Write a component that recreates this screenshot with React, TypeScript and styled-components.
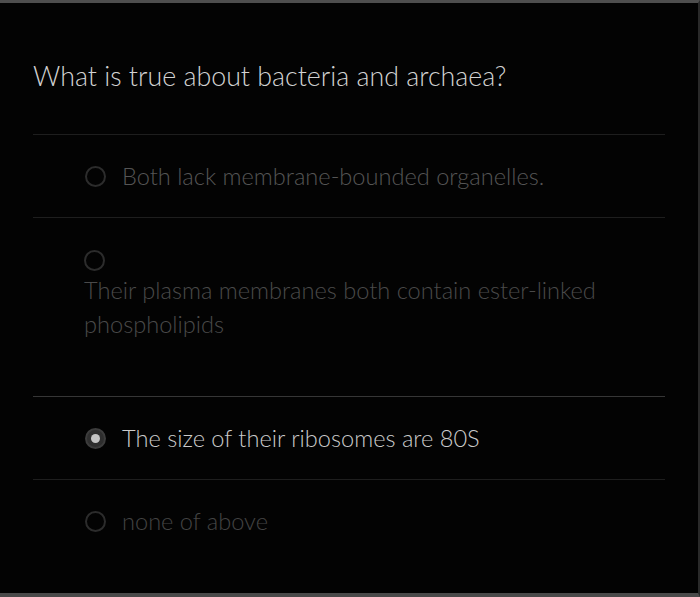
import React from "react";
import styled, { createGlobalStyle } from "styled-components";

const Global = createGlobalStyle`
  html, body { margin: 0; padding: 0; background: #030303; }
  #root { width: 700px; height: 597px; }
`;

const Frame = styled.div`
  box-sizing: border-box;
  width: 700px;
  height: 597px;
  background: #030303;
  border-top: 3px solid #4e4e4e;
  border-bottom: 4px solid #4a4a4a;
  border-right: 2px solid #2a2a2a;
  padding: 0 33px 0 33px;
  font-family: Lato, "Open Sans", sans-serif;
  font-weight: 300;
  overflow: hidden;
`;

const Title = styled.h1`
  margin: 0;
  padding: 57px 0 0 0;
  height: 74px;
  font-size: 26.8px;
  line-height: 32px;
  font-weight: 300;
  color: #d2d2d2;
`;

const List = styled.div`
  display: flex;
  flex-direction: column;
`;

const Row = styled.div<{ $stacked?: boolean; $strong?: boolean }>`
  display: flex;
  flex-direction: ${(p) => (p.$stacked ? "column" : "row")};
  align-items: ${(p) => (p.$stacked ? "flex-start" : "center")};
  gap: ${(p) => (p.$stacked ? "2px" : "16px")};
  padding: ${(p) => (p.$stacked ? "32px 30px 55px 51px" : "24px 30px 24px 52px")};
  border-top: 1px solid ${(p) => (p.$strong ? "#363636" : "#1e1e1e")};
`;

const Radio = styled.span<{ $checked?: boolean }>`
  box-sizing: border-box;
  flex: none;
  width: 21px;
  height: 21px;
  border-radius: 50%;
  border: 2px solid ${(p) => (p.$checked ? "#3c3c3c" : "#2c2c2c")};
  background: ${(p) => (p.$checked ? "#2e2e2e" : "transparent")};
  display: flex;
  align-items: center;
  justify-content: center;
  &::after {
    content: "";
    display: ${(p) => (p.$checked ? "block" : "none")};
    width: 9px;
    height: 9px;
    border-radius: 50%;
    background: #c4c4c4;
  }
`;

const Label = styled.span<{ $tone: string }>`
  font-size: 23.6px;
  line-height: 34px;
  color: ${(p) => p.$tone};
`;

const options = [
  { text: "Both lack membrane-bounded organelles.", tone: "#555555" },
  { text: "Their plasma membranes both contain ester-linked phospholipids", tone: "#4a4a4a", stacked: true },
  { text: "The size of their ribosomes are 80S", tone: "#cacaca", checked: true, strong: true },
  { text: "none of above", tone: "#444444" },
];

export default function App() {
  return (
    <>
      <Global />
      <Frame>
        <Title>What is true about bacteria and archaea?</Title>
        <List>
          {options.map((o) => (
            <Row key={o.text} $stacked={o.stacked} $strong={o.strong}>
              <Radio $checked={o.checked} />
              <Label $tone={o.tone}>{o.text}</Label>
            </Row>
          ))}
        </List>
      </Frame>
    </>
  );
}
